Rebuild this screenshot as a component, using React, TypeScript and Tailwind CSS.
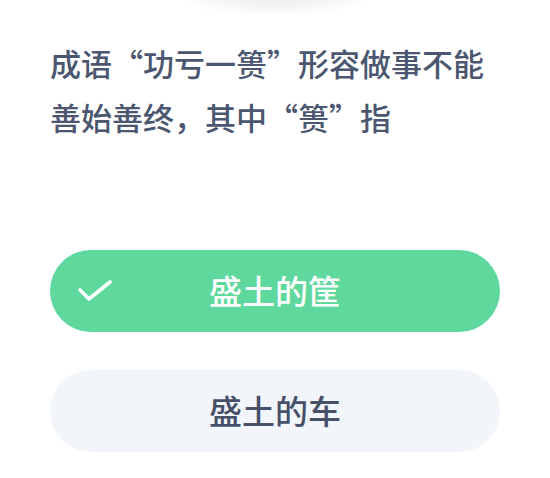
import React from "react";

const font = { fontFamily: '"Noto Sans CJK SC", "Noto Sans", sans-serif' };

const CheckIcon: React.FC = () => (
  <svg width="36" height="24" viewBox="0 0 36 24" fill="none">
    <polyline
      points="3,11 12,20 33,3"
      stroke="white"
      strokeWidth="3.6"
      strokeLinecap="round"
      strokeLinejoin="round"
    />
  </svg>
);

const App: React.FC = () => {
  return (
    <div className="w-[550px] h-[478px] bg-white overflow-hidden" style={font}>
      {/* faint shadow of the picture above */}
      <div className="h-[14px] flex justify-center">
        <div className="w-[180px] h-[14px] bg-[radial-gradient(ellipse_at_top,_#ededed_0%,_#f7f7f7_45%,_#ffffff_75%)]" />
      </div>

      <div className="px-[50px] pt-[22px]">
        <p className="text-[31px] leading-[54px] font-medium text-[#4b5670] whitespace-nowrap">
          成语“功亏一篑”形容做事不能
          <br />
          善始善终，其中“篑”指
        </p>

        <div className="mt-[106px] flex flex-col gap-[38px]">
          <div className="relative h-[82px] rounded-full bg-[#5fd89e] flex items-center justify-center">
            <span className="absolute left-[27px] top-[29px]">
              <CheckIcon />
            </span>
            <span className="text-[33px] font-medium text-white">盛土的筐</span>
          </div>
          <div className="h-[82px] rounded-full bg-[#f2f6fb] flex items-center justify-center">
            <span className="text-[33px] font-medium text-[#475069]">盛土的车</span>
          </div>
        </div>
      </div>
    </div>
  );
};

export default App;
